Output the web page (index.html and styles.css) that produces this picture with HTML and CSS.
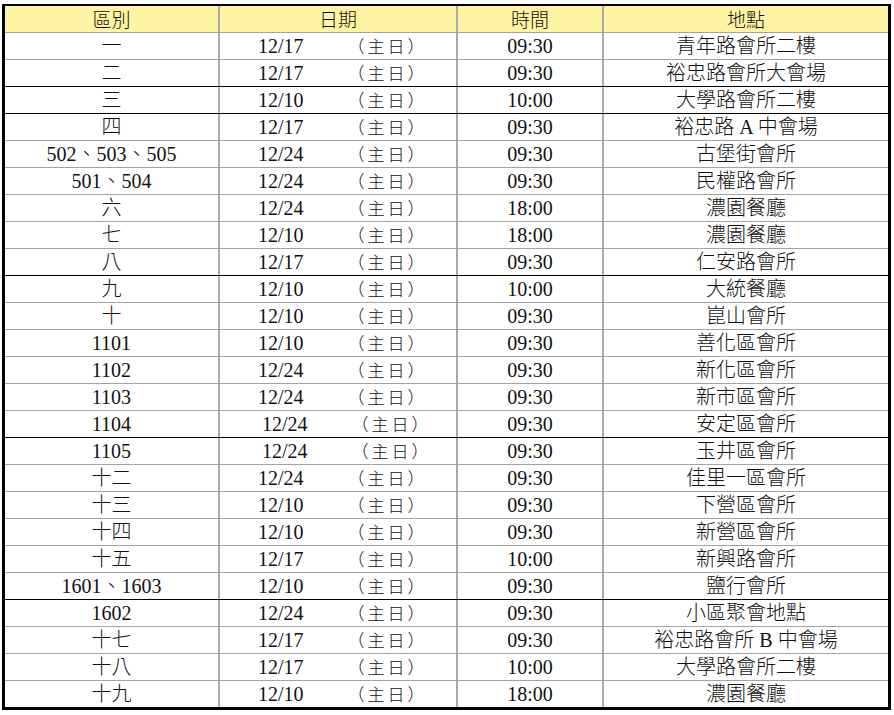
FILE: index.html
```html
<!DOCTYPE html>
<html lang="zh-Hant">
<head>
<meta charset="utf-8">
<title>聚會時間地點</title>
<link rel="stylesheet" href="styles.css">
</head>
<body>
<div class="sheet">
  <div class="row head">
    <div class="cell">區別</div>
    <div class="cell">日期</div>
    <div class="cell">時間</div>
    <div class="cell">地點</div>
  </div>
  <div class="row"><div class="cell">一</div><div class="cell date"><span class="d">12/17</span><span class="w">（主日）</span></div><div class="cell">09:30</div><div class="cell">青年路會所二樓</div></div>
  <div class="row"><div class="cell">二</div><div class="cell date"><span class="d">12/17</span><span class="w">（主日）</span></div><div class="cell">09:30</div><div class="cell">裕忠路會所大會場</div></div>
  <div class="row dk"><div class="cell">三</div><div class="cell date"><span class="d">12/10</span><span class="w">（主日）</span></div><div class="cell">10:00</div><div class="cell">大學路會所二樓</div></div>
  <div class="row dk"><div class="cell">四</div><div class="cell date"><span class="d">12/17</span><span class="w">（主日）</span></div><div class="cell">09:30</div><div class="cell">裕忠路 A 中會場</div></div>
  <div class="row"><div class="cell">502、503、505</div><div class="cell date"><span class="d">12/24</span><span class="w">（主日）</span></div><div class="cell">09:30</div><div class="cell">古堡街會所</div></div>
  <div class="row"><div class="cell">501、504</div><div class="cell date"><span class="d">12/24</span><span class="w">（主日）</span></div><div class="cell">09:30</div><div class="cell">民權路會所</div></div>
  <div class="row"><div class="cell">六</div><div class="cell date"><span class="d">12/24</span><span class="w">（主日）</span></div><div class="cell">18:00</div><div class="cell">濃園餐廳</div></div>
  <div class="row"><div class="cell">七</div><div class="cell date"><span class="d">12/10</span><span class="w">（主日）</span></div><div class="cell">18:00</div><div class="cell">濃園餐廳</div></div>
  <div class="row"><div class="cell">八</div><div class="cell date"><span class="d">12/17</span><span class="w">（主日）</span></div><div class="cell">09:30</div><div class="cell">仁安路會所</div></div>
  <div class="row dk"><div class="cell">九</div><div class="cell date"><span class="d">12/10</span><span class="w">（主日）</span></div><div class="cell">10:00</div><div class="cell">大統餐廳</div></div>
  <div class="row"><div class="cell">十</div><div class="cell date"><span class="d">12/10</span><span class="w">（主日）</span></div><div class="cell">09:30</div><div class="cell">崑山會所</div></div>
  <div class="row"><div class="cell">1101</div><div class="cell date"><span class="d">12/10</span><span class="w">（主日）</span></div><div class="cell">09:30</div><div class="cell">善化區會所</div></div>
  <div class="row"><div class="cell">1102</div><div class="cell date"><span class="d">12/24</span><span class="w">（主日）</span></div><div class="cell">09:30</div><div class="cell">新化區會所</div></div>
  <div class="row"><div class="cell">1103</div><div class="cell date"><span class="d">12/24</span><span class="w">（主日）</span></div><div class="cell">09:30</div><div class="cell">新市區會所</div></div>
  <div class="row"><div class="cell">1104</div><div class="cell date shift"><span class="d">12/24</span><span class="w">（主日）</span></div><div class="cell">09:30</div><div class="cell">安定區會所</div></div>
  <div class="row dk"><div class="cell">1105</div><div class="cell date shift"><span class="d">12/24</span><span class="w">（主日）</span></div><div class="cell">09:30</div><div class="cell">玉井區會所</div></div>
  <div class="row"><div class="cell">十二</div><div class="cell date"><span class="d">12/24</span><span class="w">（主日）</span></div><div class="cell">09:30</div><div class="cell">佳里一區會所</div></div>
  <div class="row"><div class="cell">十三</div><div class="cell date"><span class="d">12/10</span><span class="w">（主日）</span></div><div class="cell">09:30</div><div class="cell">下營區會所</div></div>
  <div class="row"><div class="cell">十四</div><div class="cell date"><span class="d">12/10</span><span class="w">（主日）</span></div><div class="cell">09:30</div><div class="cell">新營區會所</div></div>
  <div class="row"><div class="cell">十五</div><div class="cell date"><span class="d">12/17</span><span class="w">（主日）</span></div><div class="cell">10:00</div><div class="cell">新興路會所</div></div>
  <div class="row"><div class="cell">1601、1603</div><div class="cell date"><span class="d">12/10</span><span class="w">（主日）</span></div><div class="cell">09:30</div><div class="cell">鹽行會所</div></div>
  <div class="row dk"><div class="cell">1602</div><div class="cell date"><span class="d">12/24</span><span class="w">（主日）</span></div><div class="cell">09:30</div><div class="cell">小區聚會地點</div></div>
  <div class="row"><div class="cell">十七</div><div class="cell date"><span class="d">12/17</span><span class="w">（主日）</span></div><div class="cell">09:30</div><div class="cell">裕忠路會所 B 中會場</div></div>
  <div class="row"><div class="cell">十八</div><div class="cell date"><span class="d">12/17</span><span class="w">（主日）</span></div><div class="cell">10:00</div><div class="cell">大學路會所二樓</div></div>
  <div class="row"><div class="cell">十九</div><div class="cell date"><span class="d">12/10</span><span class="w">（主日）</span></div><div class="cell">18:00</div><div class="cell">濃園餐廳</div></div>
</div>
</body>
</html>
```

FILE: styles.css
```css
html, body {
  margin: 0;
  padding: 0;
  background: #fff;
}

.sheet {
  box-sizing: border-box;
  width: 889px;
  margin: 4px 0 0 2px;
  border: 3px solid #000;
  border-top-width: 2px;
  font-family: "Liberation Serif", "Noto Sans CJK TC", serif;
  font-size: 20px;
  font-weight: 300;
  color: #111;
}

.row {
  display: grid;
  grid-template-columns: 213px 238px 146px 286px;
  box-sizing: border-box;
  height: 27px;
  border-top: 1px solid #a3a3a3;
}

.row.dk {
  border-top-color: #000;
}

.row.head {
  height: 26px;
  border-top: 0;
  background: #fff4a3;
  font-family: "Noto Sans CJK TC", sans-serif;
  font-size: 19px;
}

.cell {
  display: flex;
  align-items: center;
  justify-content: center;
  line-height: 26px;
  white-space: nowrap;
  overflow: hidden;
  text-spacing-trim: space-all;
}

.cell + .cell {
  border-left: 2px solid #aaa;
}

.cell.date {
  justify-content: flex-start;
  padding-left: 38px;
}

.cell.date.shift {
  padding-left: 42px;
}

.cell.date .w {
  margin-left: 44px;
  font-family: "Noto Sans CJK TC", sans-serif;
  font-size: 17px;
  letter-spacing: 3px;
}
```
